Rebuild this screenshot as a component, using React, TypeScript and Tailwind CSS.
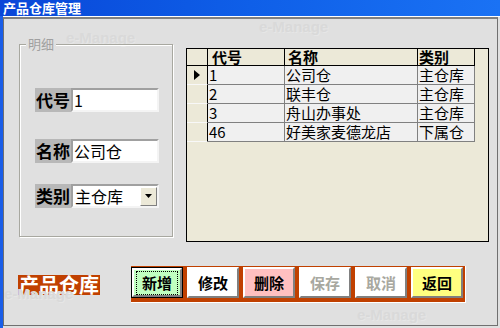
import React from 'react';

const cjk = { fontFamily: '"Noto Sans CJK SC", "Liberation Sans", sans-serif' };

const rows = [
  { code: '1', name: '公司仓', type: '主仓库' },
  { code: '2', name: '联丰仓', type: '主仓库' },
  { code: '3', name: '舟山办事处', type: '主仓库' },
  { code: '46', name: '好美家麦德龙店', type: '下属仓' },
];

const Watermark: React.FC<{ className: string }> = ({ className }) => (
  <div
    className={`absolute text-[15px] font-bold leading-[16px] text-[#d9d9d9] pointer-events-none select-none ${className}`}
    style={{ fontFamily: '"Liberation Sans", sans-serif', textShadow: '1px 1px 0 #e6e6e6' }}
  >
    e-Manage
  </div>
);

const Field: React.FC<{ label: string; children: React.ReactNode }> = ({ label, children }) => (
  <div className="flex h-[24px]">
    <div className="w-[36px] h-full bg-[#b8b8b8] text-[17px] font-bold leading-[22px] text-black flex items-center justify-center">
      {label}
    </div>
    {children}
  </div>
);

const Btn: React.FC<{ label: string; bg: string; disabled?: boolean; focused?: boolean }> = ({
  label,
  bg,
  disabled,
  focused,
}) => (
  <div className={`w-[52px] h-[31px] ${focused ? 'border border-black' : ''}`}>
    <div
      className={`w-full h-full border-2 border-t-white border-l-white border-b-[#808080] border-r-[#808080] ${bg} flex items-center justify-center`}
    >
      <div
        className={`text-[15px] font-bold leading-[18px] px-[5px] py-[2px] ${
          disabled ? 'text-[#a8a8a0]' : 'text-black'
        } ${focused ? 'border border-dotted border-black' : 'border border-transparent'}`}
      >
        {label}
      </div>
    </div>
  </div>
);

export default function App() {
  return (
    <div className="w-[500px] h-[328px] bg-[#e0e0e0] flex flex-col overflow-hidden" style={cjk}>
      {/* title bar */}
      <div className="h-[16px] bg-gradient-to-r from-[#0a46d8] via-[#0f5fe8] to-[#1a72f4] flex items-center px-[3px]">
        <span className="text-white text-[13px] font-bold leading-[16px]">产品仓库管理</span>
      </div>
      <div className="flex flex-1 min-h-0">
        <div className="w-[3px] bg-[#1a5ee8]" />
        <div className="relative flex-1 flex flex-col border-t border-t-white">
          <div className="flex-1 flex flex-col border-t-[2px] border-l border-r border-b border-t-[#808080] border-l-[#707070] border-r-[#707070] border-b-[#707070] mr-[2px] mb-[2px] pl-[15px]">
            <Watermark className="left-[63px] top-[13px]" />
            <Watermark className="left-[256px] top-[2px]" />
            <Watermark className="left-[1px] top-[269px]" />
            <Watermark className="left-[354px] top-[290px]" />

            {/* top area */}
            <div className="flex mt-[25px]">
              {/* group box */}
              <div className="relative w-[154px] h-[193px] border border-[#a8a8a0] shadow-[inset_1px_1px_0_#ffffff,1px_1px_0_#ffffff] pl-[15px] pt-[43px] flex flex-col gap-[27px]">
                <div className="absolute left-[6px] top-[-9px] bg-[#e0e0e0] px-[2px] text-[13px] leading-[16px] text-[#a0a0a0]">
                  明细
                </div>
                <Field label="代号">
                  <div className="w-[88px] h-full bg-white border-2 border-t-[#a0a0a0] border-l-[#a0a0a0] border-b-[#f4f4f4] border-r-[#f4f4f4] text-[16px] leading-[20px] px-[1px] flex items-center">
                    1
                  </div>
                </Field>
                <Field label="名称">
                  <div className="w-[88px] h-full bg-white border-2 border-t-[#a0a0a0] border-l-[#a0a0a0] border-b-[#f4f4f4] border-r-[#f4f4f4] text-[16px] leading-[20px] px-[1px] flex items-center">
                    公司仓
                  </div>
                </Field>
                <div className="-mt-[6px]">
                  <Field label="类别">
                    <div className="w-[88px] h-full bg-white border-2 border-t-[#a0a0a0] border-l-[#a0a0a0] border-b-[#f4f4f4] border-r-[#f4f4f4] flex items-center justify-between">
                      <span className="text-[16px] leading-[20px] px-[2px]">主仓库</span>
                      <div className="w-[17px] h-[19px] bg-[#ece9d8] border border-t-white border-l-white border-b-[#808080] border-r-[#808080] flex items-center justify-center">
                        <svg width="7" height="4" viewBox="0 0 7 4">
                          <path d="M0 0h7L3.5 4z" fill="#000" />
                        </svg>
                      </div>
                    </div>
                  </Field>
                </div>
              </div>

              {/* grid */}
              <div className="ml-[13px] mt-[4px] w-[303px] h-[194px] border border-black bg-[#ece9d8]">
                <div className="flex h-[17px] text-[15px] font-bold leading-[16px]">
                  <div className="w-[21px] border-r border-b border-black" />
                  <div className="w-[77px] border-r border-b border-black px-[4px]">代号</div>
                  <div className="w-[133px] border-r border-b border-black px-[3px]">名称</div>
                  <div className="w-[57px] border-r border-b border-black px-[1px]">类别</div>
                </div>
                {rows.map((r, i) => (
                  <div key={r.code} className="flex h-[19px] text-[15px] leading-[18px]">
                    <div className="w-[21px] border-r border-b border-r-black border-b-[#f8f8f8] flex items-center justify-center">
                      {i === 0 && (
                        <svg width="6" height="10" viewBox="0 0 6 10">
                          <path d="M0 0L6 5L0 10z" fill="#000" />
                        </svg>
                      )}
                    </div>
                    <div className="w-[77px] bg-[#f0f0f0] border-r border-b border-[#808080] px-[1px]">{r.code}</div>
                    <div className="w-[133px] bg-[#f0f0f0] border-r border-b border-[#808080] px-[1px]">{r.name}</div>
                    <div className="w-[57px] bg-[#f0f0f0] border-r border-b border-[#808080] px-[1px]">{r.type}</div>
                  </div>
                ))}
              </div>
            </div>

            {/* bottom area */}
            <div className="flex mt-[24px] items-start">
              <div className="mt-[9px] ml-[-1px] h-[20px] bg-[#c04000] text-white text-[20px] font-bold leading-[20px] px-[1px]">
                产品仓库
              </div>
              <div className="ml-[31px] bg-[#c04000] flex gap-[4px] pt-[1px] pb-[4px] pr-[2px] border-r border-b border-white">
                <Btn label="新增" bg="bg-[#c0ffc0]" focused />
                <Btn label="修改" bg="bg-white" />
                <Btn label="删除" bg="bg-[#ffc0c0]" />
                <Btn label="保存" bg="bg-white" disabled />
                <Btn label="取消" bg="bg-white" disabled />
                <Btn label="返回" bg="bg-[#ffff80]" />
              </div>
            </div>
          </div>
        </div>
      </div>
    </div>
  );
}
